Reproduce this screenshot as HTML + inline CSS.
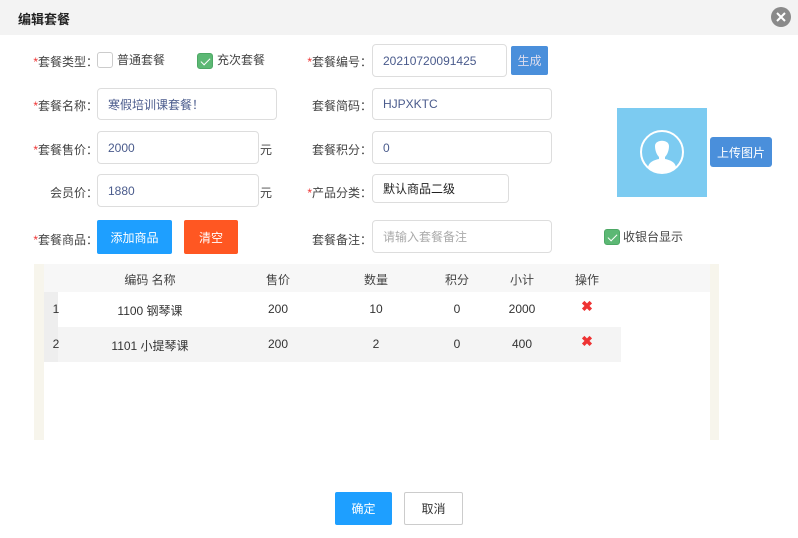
<!DOCTYPE html>
<html><head><meta charset="utf-8"><style>
*{margin:0;padding:0;box-sizing:border-box}
body{width:798px;height:538px;background:#fff;font-family:"Liberation Sans","Noto Sans CJK SC",sans-serif;font-size:12px;color:#333;position:relative;overflow:hidden}
.a{position:absolute}
.hdr{left:0;top:0;width:798px;height:35px;background:#f3f3f3}
.lbl{font-size:12px;color:#444;text-align:right;width:70px;white-space:nowrap}
.lbl b{color:#e33;font-weight:normal}
.inp{border:1px solid #ddd;border-radius:4px;background:#fff;color:#4a5b8c;font-size:12px;padding-left:10px;display:flex;align-items:center}
.btn{color:#fff;display:flex;align-items:center;justify-content:center;font-size:12px;border-radius:2px}
.cb{width:16px;height:16px;border-radius:3px;border:1px solid #ccc;background:#fff}
.cbk{background:#5cb874;border-color:#4da865}
.cbk:after{content:"";position:absolute;left:5px;top:2px;width:4px;height:8px;border:solid #fff;border-width:0 1.5px 1.5px 0;transform:rotate(45deg)}
.th{font-size:12px;color:#444;text-align:center;top:271px}
.td{font-size:12px;color:#333;text-align:center}
.x{color:#e33;font-size:14px;font-weight:bold}
</style></head><body>
<div class="a hdr"></div>
<div class="a" style="left:18px;top:9px;font-size:13px;font-weight:bold;color:#222">编辑套餐</div>
<svg class="a" style="left:771px;top:7px" width="20" height="20" viewBox="0 0 20 20"><circle cx="10" cy="10" r="10" fill="#8a8a8a"/><path d="M6 6l8 8M14 6l-8 8" stroke="#fff" stroke-width="2"/></svg>

<div class="a lbl" style="left:28px;top:53px"><b>*</b>套餐类型：</div>
<div class="a cb" style="left:97px;top:52px"></div>
<div class="a" style="left:117px;top:51px;color:#444">普通套餐</div>
<div class="a cb cbk" style="left:197px;top:53px"></div>
<div class="a" style="left:217px;top:51px;color:#444">充次套餐</div>

<div class="a lbl" style="left:28px;top:97px"><b>*</b>套餐名称：</div>
<div class="a inp" style="left:97px;top:88px;width:180px;height:32px">寒假培训课套餐！</div>
<div class="a lbl" style="left:28px;top:141px"><b>*</b>套餐售价：</div>
<div class="a inp" style="left:97px;top:131px;width:162px;height:33px">2000</div>
<div class="a" style="left:260px;top:141px;color:#444">元</div>
<div class="a lbl" style="left:28px;top:184px">会员价：</div>
<div class="a inp" style="left:97px;top:174px;width:162px;height:33px">1880</div>
<div class="a" style="left:260px;top:184px;color:#444">元</div>
<div class="a lbl" style="left:28px;top:231px"><b>*</b>套餐商品：</div>
<div class="a btn" style="left:97px;top:220px;width:75px;height:34px;background:#1e9fff">添加商品</div>
<div class="a btn" style="left:184px;top:220px;width:54px;height:34px;background:#ff5722">清空</div>

<div class="a lbl" style="left:302px;top:53px"><b>*</b>套餐编号：</div>
<div class="a inp" style="left:372px;top:44px;width:135px;height:33px">20210720091425</div>
<div class="a btn" style="left:511px;top:46px;width:37px;height:29px;background:#4a8fdb;color:#dde">生成</div>
<div class="a lbl" style="left:302px;top:97px">套餐简码：</div>
<div class="a inp" style="left:372px;top:88px;width:180px;height:32px">HJPXKTC</div>
<div class="a lbl" style="left:302px;top:141px">套餐积分：</div>
<div class="a inp" style="left:372px;top:131px;width:180px;height:33px">0</div>
<div class="a lbl" style="left:302px;top:184px"><b>*</b>产品分类：</div>
<div class="a inp" style="left:372px;top:174px;width:137px;height:29px;color:#222">默认商品二级</div>
<div class="a lbl" style="left:302px;top:231px">套餐备注：</div>
<div class="a inp" style="left:372px;top:220px;width:180px;height:33px;color:#aaa">请输入套餐备注</div>

<div class="a" style="left:617px;top:108px;width:90px;height:89px;background:#7ccbf1"></div>
<svg class="a" style="left:639px;top:129px" width="46" height="46" viewBox="0 0 46 46"><circle cx="23" cy="23" r="21" fill="none" stroke="#fff" stroke-width="2"/><path d="M16 17c0-7 14-7 14 0 0 5-2 9-4 11v2c5 1 10 3 11 8a21 21 0 0 1-28 0c1-5 6-7 11-8v-2c-2-2-4-6-4-11z" fill="#fff"/></svg>
<div class="a btn" style="left:710px;top:137px;width:62px;height:30px;background:#4a8fdb;border-radius:3px">上传图片</div>
<div class="a cb cbk" style="left:604px;top:229px;width:16px;height:16px"></div>
<div class="a" style="left:623px;top:228px;color:#444">收银台显示</div>

<div class="a" style="left:34px;top:264px;width:685px;height:176px;background:#f7f5ec"></div>
<div class="a" style="left:44px;top:264px;width:666px;height:176px;background:#fff"></div>
<div class="a" style="left:44px;top:264px;width:666px;height:28px;background:#f7f7f7"></div>
<div class="a" style="left:44px;top:292px;width:14px;height:35px;background:#eee"></div>
<div class="a" style="left:44px;top:327px;width:14px;height:35px;background:#eee"></div>
<div class="a" style="left:58px;top:327px;width:563px;height:35px;background:#f4f4f4"></div>

<div class="a th" style="left:110px;width:80px">编码 名称</div>
<div class="a th" style="left:258px;width:40px">售价</div>
<div class="a th" style="left:356px;width:40px">数量</div>
<div class="a th" style="left:437px;width:40px">积分</div>
<div class="a th" style="left:502px;width:40px">小计</div>
<div class="a th" style="left:567px;width:40px">操作</div>

<div class="a td" style="left:44px;top:302px;width:24px">1</div>
<div class="a td" style="left:100px;top:302px;width:100px">1100 钢琴课</div>
<div class="a td" style="left:258px;top:302px;width:40px">200</div>
<div class="a td" style="left:356px;top:302px;width:40px">10</div>
<div class="a td" style="left:437px;top:302px;width:40px">0</div>
<div class="a td" style="left:502px;top:302px;width:40px">2000</div>
<div class="a td x" style="left:567px;top:298px;width:40px">✖</div>

<div class="a td" style="left:44px;top:337px;width:24px">2</div>
<div class="a td" style="left:100px;top:337px;width:100px">1101 小提琴课</div>
<div class="a td" style="left:258px;top:337px;width:40px">200</div>
<div class="a td" style="left:356px;top:337px;width:40px">2</div>
<div class="a td" style="left:437px;top:337px;width:40px">0</div>
<div class="a td" style="left:502px;top:337px;width:40px">400</div>
<div class="a td x" style="left:567px;top:333px;width:40px">✖</div>

<div class="a btn" style="left:335px;top:492px;width:57px;height:33px;background:#1e9fff">确定</div>
<div class="a btn" style="left:404px;top:492px;width:59px;height:33px;background:#fff;border:1px solid #ccc;color:#333">取消</div>
</body></html>
